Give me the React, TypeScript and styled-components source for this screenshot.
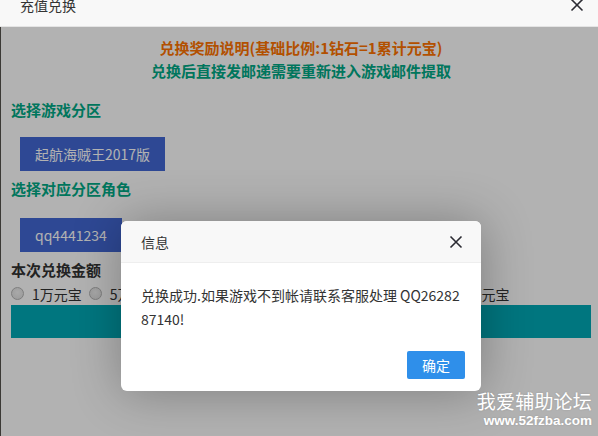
import React from 'react'
import styled, { createGlobalStyle } from 'styled-components'

const GlobalStyle = createGlobalStyle`
    html, body {
        margin: 0;
        padding: 0;
        width: 598px;
        height: 436px;
        overflow: hidden;
        background: #fff;
        font-family: "Noto Sans CJK SC", "Liberation Sans", sans-serif;
    }
`

const Page = styled.div`
    position: relative;
    width: 598px;
    height: 436px;
    overflow: hidden;
    display: flex;
    flex-direction: column;
`

const TitleBar = styled.div`
    flex: none;
    height: 42px;
    margin-top: -16px;
    padding: 0 14px 0 20px;
    display: flex;
    align-items: center;
    justify-content: space-between;
    background: #f8f8f8;
    border-bottom: 1px solid #e4e4e4;
    font-size: 14px;
    color: #333;
`

const Content = styled.div`
    position: relative;
    flex: 1;
    padding: 9px 7px 0 10px;
    border-left: 1px solid #3b3935;
    background: #fff;
`

const Intro = styled.div`
    text-align: center;
    font-size: 15px;
    font-weight: bold;
    line-height: 23px;
`

const IntroLine = styled.div<{ $color: string }>`
    color: ${p => p.$color};
`

const SectionTitle = styled.div<{ $top: number; $dark?: boolean }>`
    margin-top: ${p => p.$top}px;
    font-size: 15px;
    font-weight: bold;
    line-height: 23px;
    color: ${p => (p.$dark ? '#333' : '#00aa86')};
`

const Choice = styled.div<{ $top: number }>`
    display: inline-flex;
    align-items: center;
    height: 34px;
    margin: ${p => p.$top}px 0 0 9px;
    padding: 0 15px;
    background: #4268d4;
    color: #fff;
    font-size: 14px;
`

const RadioRow = styled.div`
    display: flex;
    align-items: center;
    height: 23px;
    margin-top: 1px;
    font-size: 14px;
    color: #333;
    white-space: nowrap;
`

const RadioDot = styled.span`
    width: 11px;
    height: 11px;
    border-radius: 50%;
    border: 1px solid #b4b4b4;
    background: radial-gradient(circle at 50% 40%, #f2f2f2, #dcdcdc);
    margin-right: 8px;
`

const RadioLabel = styled.span`
    margin-right: 7px;
`

const SubmitBar = styled.div`
    height: 33px;
    background: #00aab6;
`

const Shade = styled.div`
    position: absolute;
    inset: 0;
    background: rgba(0, 0, 0, 0.3);
`

const Dialog = styled.div`
    position: absolute;
    left: 121px;
    top: 221px;
    width: 360px;
    background: #fff;
    border-radius: 6px;
    box-shadow: 1px 1px 50px rgba(0, 0, 0, 0.3);
    overflow: hidden;
    z-index: 2;
`

const DialogHead = styled.div`
    height: 41px;
    padding: 0 18px 0 20px;
    display: flex;
    align-items: center;
    justify-content: space-between;
    background: #f8f8f8;
    border-bottom: 1px solid #eee;
    font-size: 14px;
    color: #333;
`

const DialogBody = styled.div`
    padding: 20px;
    font-size: 14px;
    line-height: 24px;
    color: #333;
    word-break: break-all;
`

const DialogFoot = styled.div`
    display: flex;
    justify-content: flex-end;
    padding: 0 16px 12px;
`

const OkButton = styled.div`
    height: 28px;
    line-height: 28px;
    padding: 0 15px;
    border-radius: 2px;
    background: #2f8fea;
    color: #fff;
    font-size: 14px;
`

const Watermark = styled.div`
    position: absolute;
    right: 6px;
    bottom: 7px;
    z-index: 3;
    color: #fff;
    text-align: right;
    text-shadow: 0 0 2px rgba(0, 0, 0, 0.15);
`

const MarkTitle = styled.div`
    font-size: 19px;
    line-height: 24px;
    letter-spacing: 0.2px;
`

const MarkUrl = styled.div`
    font-family: "Liberation Sans", Arial, sans-serif;
    font-weight: bold;
    font-size: 13.5px;
    line-height: 16px;
`

const CloseIcon = ({ size }: { size: number }) => (
    <svg width={size} height={size} viewBox="0 0 14 14">
        <path d="M1.5 1.5 L12.5 12.5 M12.5 1.5 L1.5 12.5" stroke="#2b2b33" strokeWidth="1.6" fill="none" />
    </svg>
)

const amounts = ['1万元宝', '5万元宝', '10万元宝', '20万元宝', '50万元宝', '100万元宝']

export default function App() {
    return (
        <Page>
            <GlobalStyle />
            <TitleBar>
                <span>充值兑换</span>
                <CloseIcon size={14} />
            </TitleBar>
            <Content>
                <Intro>
                    <IntroLine $color="#ff7300">兑换奖励说明(基础比例:1钻石=1累计元宝)</IntroLine>
                    <IntroLine $color="#00aa86">兑换后直接发邮递需要重新进入游戏邮件提取</IntroLine>
                </Intro>
                <SectionTitle $top={16}>选择游戏分区</SectionTitle>
                <Choice $top={16}>起航海贼王2017版</Choice>
                <SectionTitle $top={6}>选择对应分区角色</SectionTitle>
                <Choice $top={18}>qq4441234</Choice>
                <SectionTitle $top={6} $dark>本次兑换金额</SectionTitle>
                <RadioRow>
                    {amounts.map(a => (
                        <React.Fragment key={a}>
                            <RadioDot />
                            <RadioLabel>{a}</RadioLabel>
                        </React.Fragment>
                    ))}
                </RadioRow>
                <SubmitBar />
                <Shade />
            </Content>

            <Dialog>
                <DialogHead>
                    <span>信息</span>
                    <CloseIcon size={14} />
                </DialogHead>
                <DialogBody>兑换成功.如果游戏不到帐请联系客服处理 QQ2628287140!</DialogBody>
                <DialogFoot>
                    <OkButton>确定</OkButton>
                </DialogFoot>
            </Dialog>

            <Watermark>
                <MarkTitle>我爱辅助论坛</MarkTitle>
                <MarkUrl>www.52fzba.com</MarkUrl>
            </Watermark>
        </Page>
    )
}
